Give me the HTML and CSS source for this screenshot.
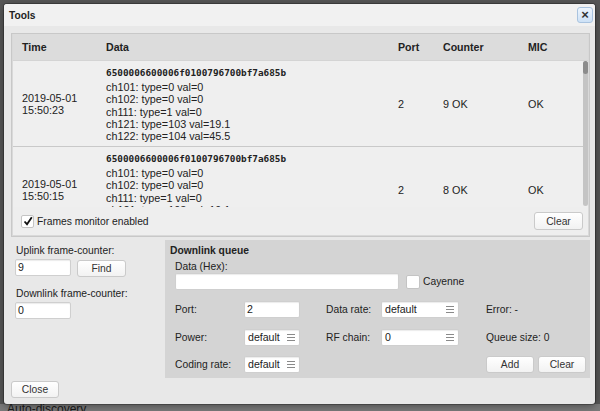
FILE: index.html
```html
<!DOCTYPE html>
<html lang="en">
<head>
  <meta charset="UTF-8">
  <title>Tools</title>
  <link rel="stylesheet" href="styles.css">
</head>
<body>

  <div class="behind">Auto-discovery</div>

  <div class="dialog">
    <div class="titlebar">
      <span class="title">Tools</span>
      <button class="x-btn">&times;</button>
    </div>

    <div class="dialog-body">

      <div class="frames">
        <div class="frames-head">
          <div>Time</div>
          <div>Data</div>
          <div>Port</div>
          <div>Counter</div>
          <div>MIC</div>
        </div>

        <div class="frames-scroll">
          <div class="frame-row">
            <div class="cell">2019-05-01<br>15:50:23</div>
            <div class="cell data">
              <div class="hex">6500006600006f0100796700bf7a685b</div>
              ch101: type=0 val=0<br>
              ch102: type=0 val=0<br>
              ch111: type=1 val=0<br>
              ch121: type=103 val=19.1<br>
              ch122: type=104 val=45.5
            </div>
            <div class="cell">2</div>
            <div class="cell">9 OK</div>
            <div class="cell">OK</div>
          </div>
          <div class="frame-row">
            <div class="cell">2019-05-01<br>15:50:15</div>
            <div class="cell data">
              <div class="hex">6500006600006f0100796700bf7a685b</div>
              ch101: type=0 val=0<br>
              ch102: type=0 val=0<br>
              ch111: type=1 val=0<br>
              ch121: type=103 val=19.1<br>
              ch122: type=104 val=45.5
            </div>
            <div class="cell">2</div>
            <div class="cell">8 OK</div>
            <div class="cell">OK</div>
          </div>
          <div class="scrollbar"><div class="thumb"></div></div>
        </div>

        <div class="frames-foot">
          <label class="check">
            <span class="box checked">
              <svg width="10" height="10" viewBox="0 0 10 10"><path d="M1.5 5.5 L4 8.2 L8.8 1.2" fill="none" stroke="#111" stroke-width="1.8"/></svg>
            </span>
            Frames monitor enabled
          </label>
          <button class="btn">Clear</button>
        </div>
      </div>

      <div class="lower">
        <div class="counters">
          <div class="lbl">Uplink frame-counter:</div>
          <div class="field-row">
            <div class="input w56">9</div>
            <button class="btn">Find</button>
          </div>
          <div class="lbl second">Downlink frame-counter:</div>
          <div class="field-row">
            <div class="input w56">0</div>
          </div>
        </div>

        <div class="queue">
          <div class="queue-title">Downlink queue</div>
          <div class="lbl hex-lbl">Data (Hex):</div>
          <div class="hex-row">
            <div class="input w224"></div>
            <span class="box"></span>
            <span>Cayenne</span>
          </div>

          <div class="queue-grid">
            <div class="g-lbl">Port:</div>
            <div class="input w56">2</div>
            <div class="g-lbl">Data rate:</div>
            <div class="input select w78">default<span class="menu-ico"></span></div>
            <div class="g-lbl">Error: -</div>

            <div class="g-lbl">Power:</div>
            <div class="input select w56">default<span class="menu-ico"></span></div>
            <div class="g-lbl">RF chain:</div>
            <div class="input select w78">0<span class="menu-ico"></span></div>
            <div class="g-lbl">Queue size: 0</div>

            <div class="g-lbl">Coding rate:</div>
            <div class="input select w56">default<span class="menu-ico"></span></div>
            <div></div>
            <div></div>
            <div class="btn-pair">
              <button class="btn">Add</button>
              <button class="btn">Clear</button>
            </div>
          </div>
        </div>
      </div>

      <button class="btn close-btn">Close</button>
    </div>
  </div>

</body>
</html>
```

FILE: styles.css
```css
* {
  margin: 0;
  padding: 0;
  box-sizing: border-box;
  font-family: 'Liberation Sans', Arial, sans-serif;
}

body {
  background: #575757;
  width: 600px;
  height: 411px;
  overflow: hidden;
  padding: 4px;
  color: #222;
  font-size: 10.3px;
}

.behind {
  position: absolute;
  left: 0;
  top: 404px;
  width: 600px;
  height: 10px;
  background: #7b7b7b;
  color: #1c1c1c;
  font-size: 12px;
  line-height: 10px;
  padding-left: 7px;
  overflow: hidden;
}

.dialog {
  position: relative;
  width: 591px;
  height: 400px;
  background: #e8e8e8;
  border-radius: 3px;
  box-shadow: 0 0 0 1px rgba(0,0,0,0.25), 0 2px 8px rgba(0,0,0,0.4);
  overflow: hidden;
}

.titlebar {
  height: 22px;
  background: #f1f1f1;
  display: flex;
  align-items: center;
  justify-content: space-between;
  padding: 0 2px 0 5px;
}

.title {
  font-weight: bold;
  font-size: 10.2px;
}

.x-btn {
  width: 16px;
  height: 16px;
  border: 1px solid #a9c3df;
  border-radius: 3px;
  background: linear-gradient(#eef5fd, #cde1f6);
  font-size: 13px;
  font-weight: bold;
  line-height: 12px;
  color: #333;
}

.dialog-body {
  padding: 7px 5px 0 7px;
}

/* frames monitor */

.frames {
  border: 1px solid #c8c8c8;
  background: #d9d9d9;
  padding: 0 1px 1px 1px;
}

.frames-head,
.frame-row {
  display: grid;
  grid-template-columns: 84px 292px 45px 85px 1fr;
}

.frames-head {
  height: 26px;
  align-items: center;
  font-weight: bold;
  font-size: 10.6px;
  background: #dcdcdc;
}

.frames-head div,
.frame-row .cell {
  padding-left: 9px;
}

.frames-scroll {
  position: relative;
  height: 147px;
  overflow: hidden;
  background: #efefef;
  border-top: 1px solid #d4d4d4;
}

.frame-row {
  font-size: 10.8px;
  line-height: 12.3px;
  border-bottom: 1px solid #c9c9c9;
}

.frame-row .cell {
  padding-top: 5px;
  padding-bottom: 3.5px;
  align-self: center;
}

.frame-row .cell.data {
  align-self: start;
}

.hex {
  font-family: 'DejaVu Sans Mono', 'Liberation Mono', monospace;
  font-weight: bold;
  font-size: 9.35px;
  line-height: 14px;
  margin-bottom: 1px;
}

.scrollbar {
  position: absolute;
  right: 0;
  top: 0;
  bottom: 1px;
  width: 5px;
  background: #c4c4c4;
  border-radius: 3px;
}

.thumb {
  height: 13px;
  background: #8c8c8c;
  border-radius: 3px;
}

.frames-foot {
  height: 28px;
  background: #eeeeee;
  display: flex;
  align-items: center;
  justify-content: space-between;
  padding: 0 5px 0 8px;
}

.check {
  display: flex;
  align-items: center;
  gap: 3px;
}

.box {
  display: inline-flex;
  align-items: center;
  justify-content: center;
  width: 13px;
  height: 13px;
  background: #fff;
  border: 1px solid #c4c4c4;
  border-radius: 2px;
}

.btn {
  height: 18px;
  width: 49px;
  border: 1px solid #cacaca;
  border-radius: 3px;
  background: linear-gradient(#ffffff, #f2f2f2);
  color: #333;
  font-size: 10.3px;
}

/* lower part */

.lower {
  display: flex;
  margin-top: 3px;
}

.counters {
  width: 155px;
  padding: 4px 0 0 4px;
}

.lbl {
  line-height: 13px;
  padding-left: 1px;
}

.lbl.second {
  margin-top: 10px;
}

.field-row {
  display: flex;
  gap: 6px;
  margin-top: 2px;
}

.field-row .btn {
  height: 17px;
  margin-top: 1px;
}

.input {
  height: 17px;
  background: #fff;
  border: 1px solid #cfcfcf;
  border-radius: 2px;
  box-shadow: inset 0 1px 1px rgba(0,0,0,0.08);
  padding-left: 2px;
  line-height: 15px;
  font-size: 10.6px;
  position: relative;
}

.w56 { width: 56px; }
.w78 { width: 78px; }
.w224 { width: 224px; }

.select {
  padding-left: 3px;
}

.menu-ico {
  position: absolute;
  right: 4px;
  top: 4px;
  width: 8px;
  height: 7px;
  border-top: 1px solid #8a8a8a;
  border-bottom: 1px solid #8a8a8a;
}

.menu-ico::after {
  content: "";
  position: absolute;
  left: 0;
  right: 0;
  top: 2px;
  border-top: 1px solid #8a8a8a;
}

.queue {
  width: 425px;
  background: #d4d4d4;
  padding: 4px 4px 5px 5px;
}

.queue-title {
  font-weight: bold;
  line-height: 13px;
}

.hex-lbl {
  margin: 3px 0 0 4px;
}

.hex-row {
  display: flex;
  align-items: center;
  gap: 3px;
  margin-left: 5px;
}

.hex-row .box {
  width: 14px;
  height: 14px;
  margin-left: 4px;
}

.queue-grid {
  display: grid;
  grid-template-columns: 69px 82px 55px 105px 1fr;
  grid-auto-rows: 17px;
  row-gap: 10.5px;
  align-items: center;
  margin: 11px 0 0 5px;
}

.g-lbl {
  line-height: 13px;
}

.btn-pair {
  display: flex;
  gap: 4px;
}

.btn-pair .btn {
  height: 17px;
  width: 48px;
}

.close-btn {
  margin-top: 3px;
  height: 17px;
  width: 48px;
}
```
